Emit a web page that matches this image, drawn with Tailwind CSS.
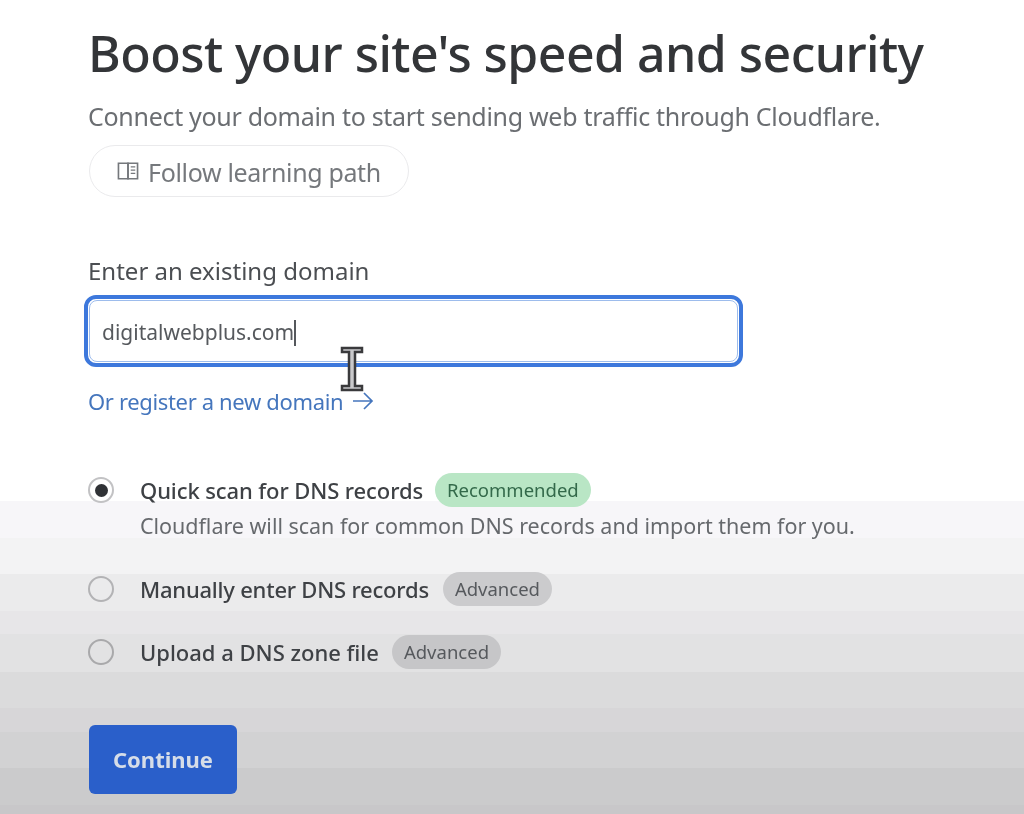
<!DOCTYPE html>
<html lang="en">
<head>
<meta charset="UTF-8">
<title>Boost your site's speed and security</title>
<script src="https://cdn.jsdelivr.net/npm/@tailwindcss/browser@4"></script>
</head>
<body class="relative w-[1024px] h-[814px] overflow-hidden bg-white font-['Noto_Sans',sans-serif] text-[#36393d]">

<!-- banded background of the video frame -->
<div class="absolute inset-0 flex flex-col">
  <div class="h-[501px] bg-white"></div>
  <div class="h-[37px] bg-[#f7f6f9]"></div>
  <div class="h-[36px] bg-[#f3f3f4]"></div>
  <div class="h-[37px] bg-[#ebebec]"></div>
  <div class="h-[23px] bg-[#e7e6e8]"></div>
  <div class="h-[38px] bg-[#e2e2e3]"></div>
  <div class="h-[36px] bg-[#dbdbdc]"></div>
  <div class="h-[24px] bg-[#d7d6d8]"></div>
  <div class="h-[36px] bg-[#d2d2d3]"></div>
  <div class="h-[37px] bg-[#cbcbcc]"></div>
  <div class="h-[9px] bg-[#c8c7c9]"></div>
</div>

<main class="relative pl-[89px] pt-[18px] flex flex-col items-start blur-[0.5px]">
  <h1 class="-ml-[1px] text-[50px] leading-[70px] font-medium tracking-[-0.55px] text-[#333538] whitespace-nowrap">Boost your site's speed and security</h1>
  <p class="-ml-[1px] mt-[10px] text-[25px] leading-[36px] tracking-[-0.3px] text-[#6b6e72] whitespace-nowrap">Connect your domain to start sending web traffic through Cloudflare.</p>
  <button class="mt-[11px] w-[320px] h-[52px] flex items-center justify-center gap-[9px] rounded-full border border-[#eaeaec] bg-white text-[25px] tracking-[-0.35px] text-[#75787c]">
    <svg class="w-[22px] h-[20px]" viewBox="0 0 24 22" fill="none" stroke="#75787c" stroke-width="1.8">
      <path d="M1.5 2.5H12V19.5H1.5Z"/>
      <path d="M12 2.5H22.5V19.5H12Z"/>
      <path d="M15 6.5H20M15 10H20M15 13.5H20" stroke-width="1.4"/>
    </svg>
    <span class="pt-[4px]">Follow learning path</span>
  </button>

  <label for="domain" class="-ml-[1px] mt-[56px] text-[24px] leading-[36px] text-[#4b4e52]">Enter an existing domain</label>
  <div class="mt-[6px] -ml-[5px] w-[659px] h-[72px] rounded-[12px] border-[4px] border-[#3d78dc] p-[1px]">
    <div class="h-full rounded-[8px] border border-[#9dbcec] bg-white flex items-center pl-[12px] pt-[3px] text-[21px] text-[#56595d]">
      <span>digitalwebplus.com</span><span class="w-[1.5px] h-[26px] bg-[#55585c]"></span>
    </div>
  </div>
  <a class="-ml-[1px] mt-[17px] flex items-center gap-[9px] text-[22px] leading-[34px] tracking-[-0.35px] text-[#4576bd]">
    Or register a new domain
    <svg class="w-[22px] h-[20px]" viewBox="0 0 22 20" fill="none" stroke="#4576bd" stroke-width="1.7"><path d="M1 10H20M12 2L20 10L12 18"/></svg>
  </a>

  <div class="-ml-[1px] mt-[55px] flex gap-[26px]">
    <span class="mt-[4px] w-[26px] h-[26px] rounded-full border-2 border-[#c2c2c4] bg-white flex items-center justify-center"><span class="w-[13px] h-[13px] rounded-full bg-[#303236]"></span></span>
    <div>
      <div class="flex items-center gap-[12px]">
        <span class="text-[22px] font-medium tracking-[-0.1px] text-[#3e4145]">Quick scan for DNS records</span>
        <span class="h-[34px] px-[12px] rounded-full bg-[#b9e6c5] text-[18.5px] leading-[34px] text-[#33694a]">Recommended</span>
      </div>
      <p class="mt-[3px] text-[21.5px] leading-[32px] tracking-[-0.03px] text-[#66696d] whitespace-nowrap">Cloudflare will scan for common DNS records and import them for you.</p>
    </div>
  </div>

  <div class="-ml-[1px] mt-[30px] flex items-center gap-[26px]">
    <span class="w-[26px] h-[26px] rounded-full border-2 border-[#b3b3b5]"></span>
    <div class="flex items-center gap-[14px]">
      <span class="text-[22px] font-medium tracking-[-0.22px] text-[#3e4145]">Manually enter DNS records</span>
      <span class="h-[34px] px-[12px] rounded-full bg-[#cbcbcd] text-[18.5px] leading-[34px] text-[#56595d]">Advanced</span>
    </div>
  </div>

  <div class="-ml-[1px] mt-[29px] flex items-center gap-[26px]">
    <span class="w-[26px] h-[26px] rounded-full border-2 border-[#a9a9ab]"></span>
    <div class="flex items-center gap-[13px]">
      <span class="text-[22px] font-medium text-[#3e4145]">Upload a DNS zone file</span>
      <span class="h-[34px] px-[12px] rounded-full bg-[#c6c6c8] text-[18.5px] leading-[34px] text-[#56595d]">Advanced</span>
    </div>
  </div>

  <button class="mt-[56px] w-[148px] h-[69px] rounded-[6px] bg-[#2a5fca] text-[22px] font-bold text-[#d6dde8]">Continue</button>
</main>

<!-- mouse cursor over the field -->
<svg class="absolute left-[340px] top-[346px] w-[24px] h-[46px] blur-[0.5px]" viewBox="0 0 24 46" fill="#c9c9cb" stroke="#3a3a3c" stroke-width="2.5">
  <path d="M2 2H22V6H15V40H22V44H2V40H9V6H2Z"/>
</svg>
</body>
</html>
